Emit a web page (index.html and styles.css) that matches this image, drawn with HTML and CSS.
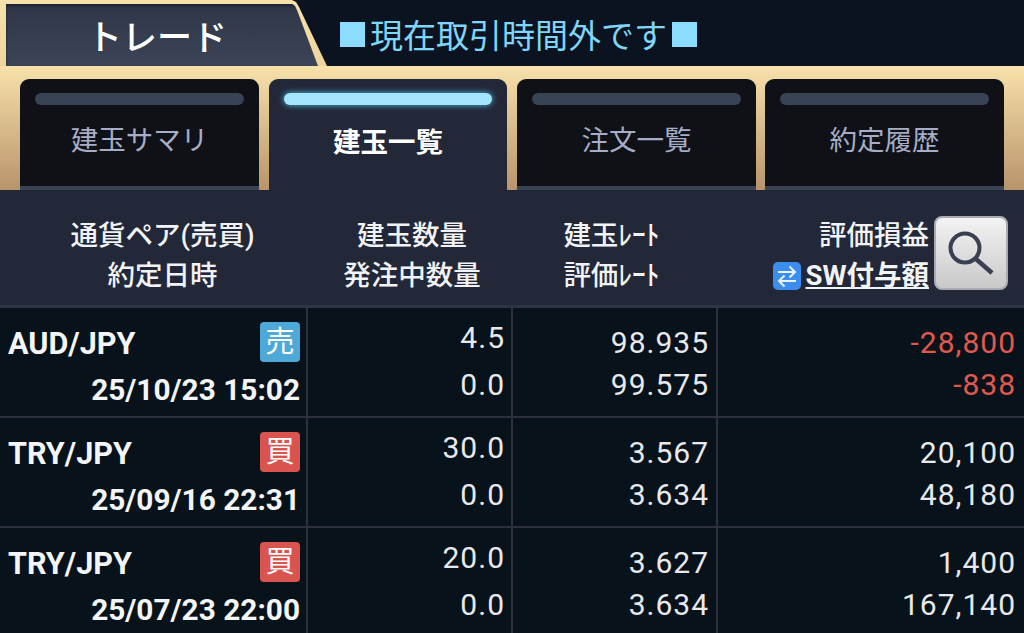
FILE: index.html
```html
<!DOCTYPE html>
<html lang="ja">
<head>
    <meta charset="UTF-8">
    <title>トレード</title>
    <link rel="stylesheet" href="styles.css">
</head>
<body>
    <div class="top">
        <div class="trade-tab"><div class="trade-inner">トレード</div></div>
        <p class="notice"><span class="sq"></span>現在取引時間外です<span class="sq"></span></p>
    </div>

    <div class="tabs">
        <div class="tab"><span class="bar"></span><p>建玉サマリ</p></div>
        <div class="tab active"><span class="bar"></span><p>建玉一覧</p></div>
        <div class="tab"><span class="bar"></span><p>注文一覧</p></div>
        <div class="tab"><span class="bar"></span><p>約定履歴</p></div>
    </div>

    <div class="head">
        <div class="hcol first"><p>通貨ペア(売買)</p><p>約定日時</p></div>
        <div class="hcol second"><p>建玉数量</p><p>発注中数量</p></div>
        <div class="hcol third"><p>建玉ﾚｰﾄ</p><p>評価ﾚｰﾄ</p></div>
        <div class="hcol fourth">
            <p>評価損益</p>
            <p class="sw">
                <svg class="sw-icon" width="28" height="28" viewBox="0 0 28 28">
                    <rect width="28" height="28" rx="5" fill="#3b8df0"/>
                    <path d="M5 10h17M16.500 4.500l5.500 5.500l-5.500 5.500M23 19H6M11.500 13.500l-5.500 5.500l5.500 5.500" fill="none" stroke="#e8f3ff" stroke-width="2"/>
                </svg>
                <u>SW付与額</u>
            </p>
        </div>
        <button class="search">
            <svg width="70" height="70" viewBox="0 0 70 70">
                <circle cx="29" cy="30" r="14.500" fill="none" stroke="#39404f" stroke-width="4"/>
                <path d="M40 41l16 14" fill="none" stroke="#39404f" stroke-width="4.500"/>
            </svg>
        </button>
    </div>

    <div class="row">
        <div class="cell pair">
            <div class="pair-top"><b>AUD/JPY</b><span class="badge sell">売</span></div>
            <b class="date">25/10/23 15:02</b>
        </div>
        <div class="cell qty"><p>4.5</p><p>0.0</p></div>
        <div class="cell"><p>98.935</p><p>99.575</p></div>
        <div class="cell last loss"><p>-28,800</p><p>-838</p></div>
    </div>
    <div class="row">
        <div class="cell pair">
            <div class="pair-top"><b>TRY/JPY</b><span class="badge buy">買</span></div>
            <b class="date">25/09/16 22:31</b>
        </div>
        <div class="cell qty"><p>30.0</p><p>0.0</p></div>
        <div class="cell"><p>3.567</p><p>3.634</p></div>
        <div class="cell last"><p>20,100</p><p>48,180</p></div>
    </div>
    <div class="row">
        <div class="cell pair">
            <div class="pair-top"><b>TRY/JPY</b><span class="badge buy">買</span></div>
            <b class="date">25/07/23 22:00</b>
        </div>
        <div class="cell qty"><p>20.0</p><p>0.0</p></div>
        <div class="cell"><p>3.627</p><p>3.634</p></div>
        <div class="cell last"><p>1,400</p><p>167,140</p></div>
    </div>
</body>
</html>
```

FILE: styles.css
```css
*{
    margin: 0;
    padding: 0;
    box-sizing: border-box;
}

html, body{
    height: 100%;
    overflow: hidden;
}

body{
    background-color: #08121a;
    font-family: Roboto, "Noto Sans CJK JP", sans-serif;
    color: #f2f3f5;
}

.top{
    display: flex;
    align-items: center;
    height: 66px;
    background-color: #0c1320;
}

.trade-tab{
    width: 327px;
    height: 66px;
    flex-shrink: 0;
    padding: 4px 0 0 6px;
    background: linear-gradient(#f8e1ab, #efd49c);
    clip-path: polygon(0 0, 292px 0, 296px 2px, 299px 7px, 327px 66px, 0 66px);
}

.trade-inner{
    height: 62px;
    display: flex;
    align-items: center;
    justify-content: center;
    padding: 0 19px 2px 0;
    font-size: 35px;
    font-weight: 500;
    color: #fff;
    background: linear-gradient(#2f3648, #3b4458);
    box-shadow: inset 0 2px 3px #1a2030;
    clip-path: polygon(0 0, 286px 0, 289px 2px, 291px 6px, 312px 62px, 0 62px);
}

.notice{
    display: flex;
    align-items: center;
    gap: 5px;
    margin: 2px 0 0 13px;
    font-size: 33px;
    color: #7fd6f7;
}

.sq{
    width: 25px;
    height: 25px;
    background-color: #8cdcff;
}

.tabs{
    display: grid;
    grid-template-columns: 239px 238px 239px 238px;
    gap: 10px;
    height: 124px;
    padding: 13px 20px 0;
    background: linear-gradient(#f8e1ab, #b8946a);
}

.tab{
    padding: 14px 15px 0;
    background-color: #0f1117;
    border-bottom: 4px solid #3a4354;
    border-radius: 9px 9px 0 0;
    color: #a6adc6;
    font-size: 27.500px;
    text-align: center;
}

.tab:last-child{
    margin-left: -1px;
}

.bar{
    display: block;
    height: 12px;
    border-radius: 6px;
    background-color: #394356;
}

.tab p{
    margin-top: 13px;
}

.tab.active{
    background-color: #232838;
    border-bottom: none;
    color: #fff;
    font-weight: 700;
}

.tab.active p{
    margin-top: 15px;
}

.tab.active .bar{
    background-color: #a5e6ff;
    box-shadow: 0 0 6px #4fc3e8;
}

.head{
    display: grid;
    grid-template-columns: 325px 174px 225px 205px 75px;
    height: 118px;
    padding-top: 26px;
    background-color: #222838;
    border-bottom: 3px solid #2d3549;
    font-size: 27.500px;
    font-weight: 500;
}

.hcol{
    display: flex;
    flex-direction: column;
    text-align: center;
    line-height: 40px;
    white-space: nowrap;
}

.hcol.fourth{
    text-align: right;
}

.sw{
    display: flex;
    justify-content: flex-end;
    align-items: center;
    gap: 5px;
    font-weight: 700;
}

.search{
    width: 74px;
    height: 74px;
    margin-left: 5px;
    border: 2px solid #a9abb0;
    border-radius: 8px;
    background: linear-gradient(#f3f3f3, #c9c9c9);
}

.search svg{
    display: block;
}

.row{
    display: grid;
    grid-template-columns: 308px 205px 205px 1fr;
    height: 110px;
    border-bottom: 2px solid #2e303d;
}

.cell{
    display: flex;
    flex-direction: column;
    align-items: flex-end;
    padding: 14px 7px 0 0;
    border-right: 2px solid #2e303d;
    font-size: 30px;
    letter-spacing: 1px;
    line-height: 42px;
    color: #e8e9ec;
}

.cell.last{
    border-right: none;
    padding-right: 8px;
}

.qty{
    padding: 9px 6px 0 0;
}

.qty p:first-child{
    margin-bottom: 5px;
}

.loss{
    color: #e0594f;
}

.pair{
    align-items: stretch;
    padding: 13px 6px 0 0;
    letter-spacing: 0;
    line-height: 46px;
}

.pair-top{
    display: flex;
    justify-content: space-between;
    align-items: center;
    height: 46px;
    padding-left: 8px;
}

.pair-top b{
    font-size: 30.600px;
}

.date{
    text-align: right;
    font-size: 29.800px;
}

.pair b{
    font-weight: 700;
    color: #f4f5f7;
}

.badge{
    display: flex;
    align-items: center;
    justify-content: center;
    width: 40px;
    height: 40px;
    margin-top: -4px;
    border-radius: 4px;
    font-size: 29px;
    line-height: 40px;
    color: #fff;
}

.sell{
    background-color: #4fa9d8;
}

.buy{
    background-color: #d9534f;
}
```
